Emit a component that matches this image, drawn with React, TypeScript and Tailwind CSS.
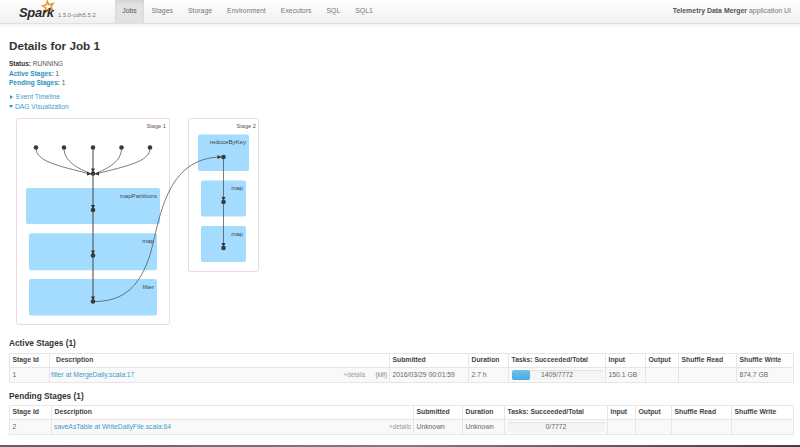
const sans = "font-['Liberation_Sans',Arial,sans-serif]";

const navItems = ['Stages', 'Storage', 'Environment', 'Executors', 'SQL', 'SQL1'];

function SparkLogo() {
    return (
        <div className="relative w-[36px] h-[20px] ml-[19px]">
            <svg className="absolute left-[22px] top-0" width="14" height="14" viewBox="0 0 18 17">
                <path d="M8 1 L10 5.5 L15.5 4 L12.5 8.5 L15 12.5 L9.5 11.5 L6 15 L6 9.5 L2 7 L7 5.5 Z" fill="none" stroke="#e8953a" strokeWidth="2" />
            </svg>
            <span className="absolute left-0 top-[3px] text-[13px] leading-[20px] font-bold italic text-[#2d2d2d] tracking-[-0.3px]">Spark</span>
        </div>
    );
}

function Navbar() {
    return (
        <div className="h-[24px] flex items-stretch bg-gradient-to-b from-white to-[#f0f0f0] border-b border-[#e0e0e0] shadow-[0_1px_4px_rgba(0,0,0,0.07)]">
            <SparkLogo />
            <span className="ml-[3px] mt-[11px] w-[38px] whitespace-nowrap text-[5.9px] leading-[8px] text-[#777]">1.5.0-cdh5.5.2</span>
            <div className="ml-[19px] flex text-[6.9px] text-[#777]">
                <div className="w-[29px] flex items-center justify-center bg-[#e3e3e3] shadow-[inset_0_2px_4px_rgba(0,0,0,0.08)] text-[#555]">Jobs</div>
                {navItems.map((item) => (
                    <div key={item} className="flex items-center px-[7.5px]">{item}</div>
                ))}
            </div>
            <div className="ml-auto mr-[9px] flex items-center text-[6.95px] text-[#777]">
                <strong className="text-[#555]">Telemetry Data Merger</strong>&nbsp;application UI
            </div>
        </div>
    );
}

function DagGraph() {
    const boxes = [
        { x: 26, y: 188, w: 134, h: 36, label: 'mapPartitions', lx: 157 },
        { x: 29, y: 233.3, w: 128, h: 37, label: 'map', lx: 154 },
        { x: 29, y: 279, w: 128, h: 36.5, label: 'filter', lx: 154 },
        { x: 198, y: 134.5, w: 51, h: 36.5, label: 'reduceByKey', lx: 246 },
        { x: 201, y: 180.5, w: 45, h: 36, label: 'map', lx: 243 },
        { x: 201, y: 226, w: 45, h: 36, label: 'map', lx: 243 },
    ];
    const nodes: [number, number][] = [
        [36, 147.5], [64, 147.5], [93, 147.5], [121.5, 147.5], [150, 147.5],
        [93, 173.5], [93, 210], [93, 255.5], [93, 301.5],
        [223.5, 157], [223.5, 202], [223.5, 248],
    ];
    const arrows = ['M87 171.5 L91.5 174 L87 175.5 Z', 'M99 171.5 L94.5 174 L99 175.5 Z'];
    const downArrows: [number, number][] = [[93, 168.5], [93, 205], [93, 250.5], [93, 296.5], [223.5, 197], [223.5, 243]];
    return (
        <svg className="block" width="800" height="215" viewBox="0 112 800 215" fontFamily="Liberation Sans, Arial, sans-serif">
            <rect x="16.5" y="118.5" width="153" height="206" rx="2" fill="#fff" stroke="#f0d6de" />
            <rect x="188.5" y="118.5" width="70" height="153" rx="2" fill="#fff" stroke="#f0d6de" />
            <text x="166" y="127.5" textAnchor="end" fontSize="5.7" fill="#555">Stage 1</text>
            <text x="256" y="127.5" textAnchor="end" fontSize="5.7" fill="#555">Stage 2</text>
            {boxes.map((b) => (
                <g key={b.y + b.label + b.x}>
                    <rect x={b.x} y={b.y} width={b.w} height={b.h} rx="2" fill="#a4dcff" />
                    <text x={b.lx} y={b.y + 9.5} textAnchor="end" fontSize="6.1" fill="#444">{b.label}</text>
                </g>
            ))}
            <g fill="none" stroke="#444" strokeWidth="0.7">
                <path d="M36 148 C36 162 60 166 90 174" />
                <path d="M64 148 C64 162 78 168 91 174" />
                <path d="M121.5 148 C121.5 162 108 168 95 174" />
                <path d="M150 148 C150 162 126 166 96 174" />
                <path d="M93 301.5 C125 302 140 285 150 255 C160 220 165 157 222 157" />
                <path d="M223.5 157 L223.5 248" />
            </g>
            <path d="M93 148 L93 301.5" fill="none" stroke="#555" strokeWidth="1.1" />
            {arrows.map((d) => <path key={d} d={d} fill="#333" />)}
            {downArrows.map(([x, y]) => (
                <path key={`${x}-${y}`} d={`M${x - 2} ${y} L${x + 2} ${y} L${x} ${y + 4} Z`} fill="#333" />
            ))}
            <path d="M217.5 155 L221.5 157 L217.5 159 Z" fill="#333" />
            {nodes.map(([x, y]) => <circle key={`${x}-${y}`} cx={x} cy={y} r="2.3" fill="#3a3a3a" />)}
        </svg>
    );
}

type Col = { label: string; width: string; extra?: string };

const cellBorder = 'border-l border-[#e6e6e6] first:border-l-0';

function StageTable({ cols, children }: { cols: Col[]; children: React.ReactNode }) {
    return (
        <table className="table-fixed w-[783px] border border-[#e6e6e6] border-separate border-spacing-0 text-[6.8px] text-[#666]">
            <thead>
                <tr className="h-[14px]">
                    {cols.map((c) => (
                        <th key={c.label} className={`${c.width} ${cellBorder} ${c.extra ?? 'pl-[2.5px]'} text-left font-bold text-[#444] border-b`}>{c.label}</th>
                    ))}
                </tr>
            </thead>
            <tbody>
                <tr className="h-[14px] bg-[#f9f9f9]">{children}</tr>
            </tbody>
        </table>
    );
}

function Progress({ fill, label }: { fill: boolean; label: string }) {
    return (
        <div className="relative h-[10px] bg-[#f5f5f5] rounded-[2px] shadow-[inset_0_1px_1px_rgba(0,0,0,0.08)] text-center leading-[10px] text-[#666]">
            {fill && <div className="absolute left-0 top-0 h-full w-[18px] rounded-[2px] bg-gradient-to-b from-[#6fc0ee] to-[#4aa8e0]" />}
            <span className="relative">{label}</span>
        </div>
    );
}

const activeCols: Col[] = [
    { label: 'Stage Id', width: 'w-[39px]' },
    { label: 'Description', width: 'w-[340px]', extra: 'pl-[6px]' },
    { label: 'Submitted', width: 'w-[79px]' },
    { label: 'Duration', width: 'w-[40px]' },
    { label: 'Tasks: Succeeded/Total', width: 'w-[97px]' },
    { label: 'Input', width: 'w-[40px]' },
    { label: 'Output', width: 'w-[33px]' },
    { label: 'Shuffle Read', width: 'w-[58px]' },
    { label: 'Shuffle Write', width: 'w-[57px]' },
];

const pendingCols: Col[] = [
    { label: 'Stage Id', width: 'w-[41px]' },
    { label: 'Description', width: 'w-[362px]' },
    { label: 'Submitted', width: 'w-[49px]' },
    { label: 'Duration', width: 'w-[42px]' },
    { label: 'Tasks: Succeeded/Total', width: 'w-[103px]' },
    { label: 'Input', width: 'w-[28px]' },
    { label: 'Output', width: 'w-[36px]' },
    { label: 'Shuffle Read', width: 'w-[60px]' },
    { label: 'Shuffle Write', width: 'w-[62px]' },
];

const td = `${cellBorder} px-[2.5px]`;

export default function App() {
    return (
        <div className={`${sans} relative h-[447px] overflow-hidden bg-white`}>
            <Navbar />
            <div className="px-[9px]">
                <h3 className="mt-[12.5px] text-[11.7px] leading-[17px] font-bold text-[#333]">Details for Job 1</h3>
                <ul className="mt-[5.5px] text-[6.5px] leading-[9.6px] text-[#555]">
                    <li><strong className="text-[#333]">Status:</strong> RUNNING</li>
                    <li><strong className="text-[#2e8fc0]">Active Stages:</strong> 1</li>
                    <li><strong className="text-[#2e8fc0]">Pending Stages:</strong> 1</li>
                </ul>
                <div className="mt-[4px] text-[6.7px] leading-[10px] text-[#3f9bc9]">
                    <div className="flex items-center">
                        <span className="ml-[1px] w-0 h-0 border-y-[2.5px] border-y-transparent border-l-[3px] border-l-[#2e8fc0]" />
                        <span className="ml-[3px]">Event Timeline</span>
                    </div>
                    <div className="flex items-center">
                        <span className="w-0 h-0 border-x-[2.5px] border-x-transparent border-t-[3px] border-t-[#2e8fc0]" />
                        <span className="ml-[2px]">DAG Visualization</span>
                    </div>
                </div>
            </div>
            <DagGraph />
            <div className="px-[9px]">
                <h4 className="mt-[10.5px] text-[8.3px] leading-[12px] font-bold text-[#333]">Active Stages (1)</h4>
                <div className="mt-[3.5px]">
                    <StageTable cols={activeCols}>
                        <td className={td}>1</td>
                        <td className={`${cellBorder} pl-[1px] pr-[2px]`}>
                            <div className="flex">
                                <span className="text-[#3f9bc9]">filter at MergeDaily.scala:17</span>
                                <span className="ml-auto text-[6.3px] text-[#999]">+details</span>
                                <span className="ml-[10px] text-[6.3px] text-[#888]">(kill)</span>
                            </div>
                        </td>
                        <td className={td}>2016/03/29 00:01:59</td>
                        <td className={td}>2.7 h</td>
                        <td className={td}><Progress fill label="1409/7772" /></td>
                        <td className={td}>150.1 GB</td>
                        <td className={td} />
                        <td className={td} />
                        <td className={td}>874.7 GB</td>
                    </StageTable>
                </div>
                <h4 className="mt-[7px] text-[8.3px] leading-[12px] font-bold text-[#333]">Pending Stages (1)</h4>
                <div className="mt-[3px]">
                    <StageTable cols={pendingCols}>
                        <td className={td}>2</td>
                        <td className={`${cellBorder} pl-[2px] pr-[2px]`}>
                            <div className="flex">
                                <span className="text-[#3f9bc9]">saveAsTable at WriteDailyFile.scala:64</span>
                                <span className="ml-auto text-[6.3px] text-[#999]">+details</span>
                            </div>
                        </td>
                        <td className={td}>Unknown</td>
                        <td className={td}>Unknown</td>
                        <td className={td}><Progress fill={false} label="0/7772" /></td>
                        <td className={td} />
                        <td className={td} />
                        <td className={td} />
                        <td className={td} />
                    </StageTable>
                </div>
            </div>
            <div className="absolute bottom-0 left-0 right-0 h-[2px] bg-gradient-to-r from-[#6b5a5e] via-[#8a7a7e] to-[#4a3a44]" />
        </div>
    );
}
